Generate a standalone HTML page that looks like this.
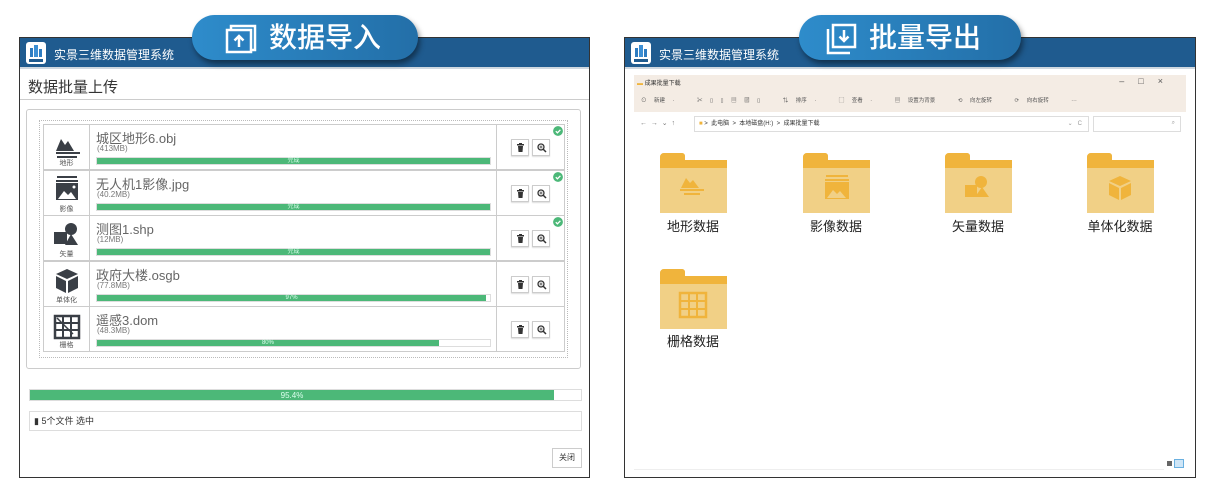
<!DOCTYPE html>
<html><head><meta charset="utf-8"><style>
*{margin:0;padding:0;box-sizing:border-box}
body{width:1206px;height:491px;background:#fff;position:relative;overflow:hidden;font-family:"Liberation Sans","Noto Sans CJK SC",sans-serif;color:#333}
.a{position:absolute}
.panel{position:absolute;top:37px;height:441px;border:1px solid #333;background:#fff}
.hdr{position:absolute;left:0;top:0;right:0;height:31px;background:#1f5b8f;border-bottom:2px solid #cfd8e0}
.logo{position:absolute;left:6px;top:4px;width:20px;height:22px;background:#fff;border-radius:3px}
.htxt{position:absolute;left:34px;top:8px;color:#fff;font-size:12px}
.badge{position:absolute;top:15px;height:45px;border-radius:23px;background:linear-gradient(90deg,#2e8ccb,#236fa8);box-shadow:2px 4px 6px rgba(0,0,0,.45);color:#fff;font-size:28px;font-weight:500;line-height:45px}
.row{position:absolute;left:43px;width:522px;height:46px;border:1px solid #ccc}
.ic{position:absolute;left:0;top:0;width:46px;height:100%;border-right:1px solid #ccc;text-align:center}
.ic span{position:absolute;bottom:1px;left:0;width:100%;font-size:7px;color:#555}
.nm{position:absolute;left:52px;top:3px;font-size:13px;color:#666}
.sz{position:absolute;left:53px;top:19px;font-size:8px;color:#777}
.bar{position:absolute;left:52px;top:32px;width:395px;height:8px;border:1px solid #ddd;background:#fff}
.bar i{display:block;height:100%;background:#4cb878;font-size:6px;color:#dfe;text-align:center;line-height:7px;font-style:normal}
.ac{position:absolute;left:452px;top:0;width:1px;height:100%;background:#ccc}
.btn{position:absolute;top:14px;width:18px;height:17px;border:1px solid #ccc;background:#fff;box-shadow:0 1px 1px #ddd}
.btn svg{position:absolute;left:4px;top:3px}
.chk{position:absolute;left:509px;top:1px;width:10px;height:10px;border-radius:50%;background:#4cb878}
.fold{position:absolute;width:67px;height:60px}
.fl{position:absolute;font-size:13px;color:#222;width:100px;text-align:center}
</style></head><body>
<svg width="0" height="0" style="position:absolute"><defs>
<g id="tr"><rect x="1" y="1" width="7" height="1.5" fill="#333"/><rect x="3" y="0" width="3" height="1" fill="#333"/><path d="M2 3h5l-.5 6h-4z" fill="#333"/></g>
<g id="zm"><circle cx="4" cy="4" r="3" fill="none" stroke="#333" stroke-width="1.3"/><path d="M6 6l3 3" stroke="#333" stroke-width="1.5"/><path d="M2.5 4h3M4 2.5v3" stroke="#333" stroke-width=".8"/></g>
<g id="ck"><circle cx="5" cy="5" r="5" fill="#4cb878"/><path d="M2.8 5.2l1.6 1.6 3-3" stroke="#fff" stroke-width="1.3" fill="none"/></g>
<g id="f"><path d="M0 4a4 4 0 0 1 4-4h18a3 3 0 0 1 3 3v4h42v53a4 4 0 0 1-4 4H4a4 4 0 0 1-4-4z" fill="#f1d086"/><path d="M0 4a4 4 0 0 1 4-4h18a3 3 0 0 1 3 3v4h42v8H0z" fill="#f0b43c"/></g>
</defs></svg>

<!-- LEFT PANEL -->
<div class="panel" style="left:19px;width:571px">
 <div class="hdr"><div class="logo"><svg width="20" height="22"><rect x="4" y="6" width="3" height="9" fill="#2d7cc1"/><rect x="8" y="3" width="4" height="12" fill="#3c8fd4"/><rect x="13" y="7" width="3" height="8" fill="#2d7cc1"/><rect x="3" y="17" width="14" height="3" fill="#1f5b8f"/></svg></div><div class="htxt">实景三维数据管理系统</div></div>
 <div class="a" style="left:8px;top:38px;font-size:15px;color:#333">数据批量上传</div>
 <div class="a" style="left:0;top:61px;width:569px;height:1px;background:#ccc"></div>
 <div class="a" style="left:6px;top:71px;width:555px;height:260px;border:1px solid #ccc;border-radius:3px"></div>
 <div class="a" style="left:19px;top:82px;width:529px;height:238px;border:1px dotted #bbb"></div>
 <div class="a" style="left:9px;top:351px;width:553px;height:12px;border:1px solid #ddd"><div style="width:524px;height:100%;background:#4cb878;color:#dfe;font-size:8px;text-align:center;line-height:11px">95.4%</div></div>
 <div class="a" style="left:9px;top:373px;width:553px;height:20px;border:1px solid #ddd;font-size:9px;line-height:18px;padding-left:4px;color:#333">&#9646; 5个文件 选中</div>
 <div class="a" style="left:532px;top:410px;width:30px;height:20px;border:1px solid #ccc;font-size:8px;line-height:18px;text-align:center">关闭</div>
</div>
<div class="badge" style="left:192px;width:226px"><svg class="a" style="left:33px;top:9px" width="32" height="30"><rect x="6" y="2" width="24" height="24" fill="none" stroke="#fff" stroke-width="2.5"/><rect x="2" y="6" width="24" height="22" fill="#2a7fbf" stroke="#fff" stroke-width="2.5"/><path d="M14 23V12M9.5 16.5L14 12l4.5 4.5" stroke="#fff" stroke-width="2.5" fill="none"/></svg><span class="a" style="left:77px;top:0">数据导入</span></div>

<!-- rows -->
<div class="row" style="top:124px"><div class="ic"><svg width="46" height="36"><path d="M12 26l5-12 4 6 3-4 6 10z" fill="#3a3f46"/><rect x="12" y="27" width="24" height="2" fill="#3a3f46"/><rect x="13" y="31" width="20" height="2" fill="#3a3f46"/></svg><span>地形</span></div><div class="nm">城区地形6.obj</div><div class="sz">(413MB)</div><div class="bar"><i style="width:100%">完成</i></div><div class="ac"></div><div class="btn" style="left:467px"><svg width="10" height="10"><use href="#tr"/></svg></div><div class="btn" style="left:488px"><svg width="10" height="10"><use href="#zm"/></svg></div><svg class="chk" width="10" height="10" style="background:none"><use href="#ck"/></svg></div>
<div class="row" style="top:170px"><div class="ic"><svg width="46" height="36"><rect x="13" y="5" width="20" height="2" fill="#3a3f46"/><rect x="12" y="9" width="22" height="2" fill="#3a3f46"/><rect x="12" y="12" width="22" height="17" fill="#3a3f46"/><path d="M14 28l6-8 4 4 3-3 5 7z" fill="#fff"/><circle cx="30" cy="16" r="1.5" fill="#fff"/></svg><span>影像</span></div><div class="nm">无人机1影像.jpg</div><div class="sz">(40.2MB)</div><div class="bar"><i style="width:100%">完成</i></div><div class="ac"></div><div class="btn" style="left:467px"><svg width="10" height="10"><use href="#tr"/></svg></div><div class="btn" style="left:488px"><svg width="10" height="10"><use href="#zm"/></svg></div><svg class="chk" width="10" height="10" style="background:none"><use href="#ck"/></svg></div>
<div class="row" style="top:215px"><div class="ic"><svg width="46" height="36"><circle cx="27" cy="13" r="6" fill="#3a3f46"/><rect x="10" y="16" width="13" height="12" fill="#3a3f46"/><path d="M27 18l7 11H21z" fill="#3a3f46"/></svg><span>矢量</span></div><div class="nm">测图1.shp</div><div class="sz">(12MB)</div><div class="bar"><i style="width:100%">完成</i></div><div class="ac"></div><div class="btn" style="left:467px"><svg width="10" height="10"><use href="#tr"/></svg></div><div class="btn" style="left:488px"><svg width="10" height="10"><use href="#zm"/></svg></div><svg class="chk" width="10" height="10" style="background:none"><use href="#ck"/></svg></div>
<div class="row" style="top:261px"><div class="ic"><svg width="46" height="36"><path d="M23 7l11 5-11 5-11-5z" fill="#3a3f46"/><path d="M12 14l10 5v12l-10-5z M34 14l-10 5v12l10-5z" fill="#3a3f46"/></svg><span>单体化</span></div><div class="nm">政府大楼.osgb</div><div class="sz">(77.8MB)</div><div class="bar"><i style="width:99%">97%</i></div><div class="ac"></div><div class="btn" style="left:467px"><svg width="10" height="10"><use href="#tr"/></svg></div><div class="btn" style="left:488px"><svg width="10" height="10"><use href="#zm"/></svg></div></div>
<div class="row" style="top:306px"><div class="ic"><svg width="46" height="36"><rect x="11" y="9" width="24" height="22" fill="none" stroke="#3a3f46" stroke-width="2.5"/><path d="M19 9v22M27 9v22M11 16h24M11 23h24" stroke="#3a3f46" stroke-width="2"/><path d="M13 11l16 16" stroke="#3a3f46" stroke-width="1.5"/></svg><span>栅格</span></div><div class="nm">遥感3.dom</div><div class="sz">(48.3MB)</div><div class="bar"><i style="width:87%">80%</i></div><div class="ac"></div><div class="btn" style="left:467px"><svg width="10" height="10"><use href="#tr"/></svg></div><div class="btn" style="left:488px"><svg width="10" height="10"><use href="#zm"/></svg></div></div>

<!-- RIGHT PANEL -->
<div class="panel" style="left:624px;width:572px">
 <div class="hdr"><div class="logo"><svg width="20" height="22"><rect x="4" y="6" width="3" height="9" fill="#2d7cc1"/><rect x="8" y="3" width="4" height="12" fill="#3c8fd4"/><rect x="13" y="7" width="3" height="8" fill="#2d7cc1"/><rect x="3" y="17" width="14" height="3" fill="#1f5b8f"/></svg></div><div class="htxt">实景三维数据管理系统</div></div>
 <div class="a" style="left:9px;top:37px;width:552px;height:37px;background:#f4ece4"></div>
 <div class="a" style="left:12px;top:40px;font-size:6px;color:#333"><span style="color:#f0b43c">▬</span> 成果批量下载</div>
 <div class="a" style="right:18px;top:38px;font-size:9px;color:#555;letter-spacing:14px">–□×</div>
 <div class="a" style="left:16px;top:58px;font-size:5.5px;color:#555;word-spacing:6px">⊙ 新建 · &nbsp; ✂ ▯ ▯ ▤ ▨ ▯ &nbsp; ⇅ 排序 · &nbsp; ▢ 查看 · &nbsp; ▤ 设置为背景 &nbsp; ⟲ 向左旋转 &nbsp; ⟳ 向右旋转 &nbsp; ···</div>
 <div class="a" style="left:15px;top:81px;font-size:7px;color:#777">← &nbsp;→ &nbsp;⌄ &nbsp;↑</div>
 <div class="a" style="left:69px;top:78px;width:395px;height:16px;border:1px solid #ddd;font-size:6px;line-height:14px;padding-left:4px;color:#333"><span style="color:#f0b43c">■</span> &gt; &nbsp;此电脑 &nbsp;&gt; &nbsp;本地磁盘(H:) &nbsp;&gt; &nbsp;成果批量下载<span style="position:absolute;right:6px;color:#999">⌄ &nbsp;&nbsp;C</span></div>
 <div class="a" style="left:468px;top:78px;width:88px;height:16px;border:1px solid #ddd;font-size:6px;text-align:right;padding:3px 5px;color:#999">⌕</div>
 <div class="a" style="left:9px;top:431px;width:530px;height:1px;background:#eee"></div>
 <div class="a" style="left:542px;top:423px;width:5px;height:5px;background:#666"></div>
 <div class="a" style="left:549px;top:421px;width:10px;height:9px;border:1px solid #6ab0e0;background:#cfe6f7"></div>
</div>
<div class="badge" style="left:799px;width:222px"><svg class="a" style="left:25px;top:8px" width="34" height="32"><path d="M4 6v24h22" fill="none" stroke="#fff" stroke-width="2.5"/><rect x="9" y="2" width="22" height="22" fill="none" stroke="#fff" stroke-width="2.5"/><path d="M20 7v11M15.5 13.5L20 18l4.5-4.5" stroke="#fff" stroke-width="2.5" fill="none"/></svg><span class="a" style="left:70px;top:0">批量导出</span></div>

<!-- folders -->
<svg class="fold" style="left:660px;top:153px" width="67" height="60"><use href="#f"/><path d="M21 35l5-10 4 5 3-3 6 8z" fill="#f0b43c"/><rect x="20" y="36" width="24" height="2" fill="#f0b43c"/><rect x="24" y="40" width="16" height="2" fill="#f0b43c"/></svg>
<svg class="fold" style="left:803px;top:153px" width="67" height="60"><use href="#f"/><rect x="23" y="22" width="22" height="2" fill="#f0b43c"/><rect x="22" y="26" width="24" height="2" fill="#f0b43c"/><path d="M22 29h24v17H22z" fill="#f0b43c"/><path d="M24 45l6-8 4 4 3-3 6 7z" fill="#f1d086"/></svg>
<svg class="fold" style="left:945px;top:153px" width="67" height="60"><use href="#f"/><circle cx="36" cy="29" r="6" fill="#f0b43c"/><rect x="20" y="32" width="12" height="12" fill="#f0b43c"/><path d="M37 34l7 10H30z" fill="#f0b43c"/></svg>
<svg class="fold" style="left:1087px;top:153px" width="67" height="60"><use href="#f"/><path d="M33 23l11 5-11 5-11-5z M22 30l10 5v12l-10-5z M44 30l-10 5v12l10-5z" fill="#f0b43c"/></svg>
<svg class="fold" style="left:660px;top:269px" width="67" height="60"><use href="#f"/><rect x="20" y="24" width="26" height="24" fill="none" stroke="#f0b43c" stroke-width="2.5"/><path d="M29 24v24M37 24v24M20 32h26M20 40h26" stroke="#f0b43c" stroke-width="2"/></svg>
<div class="fl" style="left:643px;top:216px">地形数据</div>
<div class="fl" style="left:786px;top:216px">影像数据</div>
<div class="fl" style="left:928px;top:216px">矢量数据</div>
<div class="fl" style="left:1070px;top:216px">单体化数据</div>
<div class="fl" style="left:643px;top:331px">栅格数据</div>
</body></html>
